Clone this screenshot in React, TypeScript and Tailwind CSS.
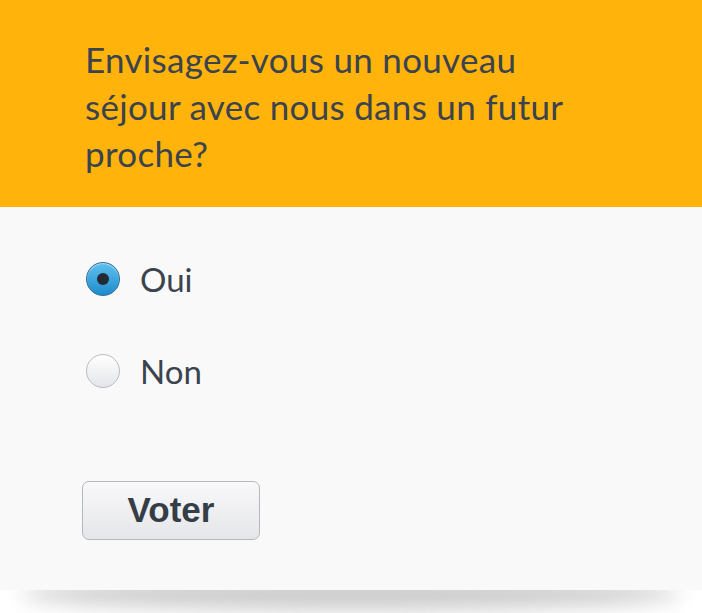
import React, { useState } from "react";

export default function App() {
    const [choice, setChoice] = useState("oui");
    const options = [
        { id: "oui", label: "Oui" },
        { id: "non", label: "Non" },
    ];
    return (
        <div className="w-[702px] h-[613px] bg-white overflow-hidden font-['Lato',sans-serif]">
            <div className="relative">
                {/* Question */}
                <div className="bg-[#ffb30b] h-[207px] pl-[85px] pr-[60px] pt-[36px]">
                    <h2 className="max-w-[510px] text-[35px] leading-[47px] text-[#3a434e] tracking-[0.3px]">
                        Envisagez-vous un nouveau séjour avec nous dans un futur proche?
                    </h2>
                </div>

                {/* Options */}
                <div className="relative z-10 bg-[#f9f9f9] h-[383px] pl-[86px] pt-[55px]">
                    <div className="flex flex-col gap-[58px]">
                        {options.map((o) => (
                            <label key={o.id} className="flex items-center gap-[20px] cursor-pointer h-[34px]" onClick={() => setChoice(o.id)}>
                                {choice === o.id ? (
                                    <span className="w-[34px] h-[34px] rounded-full border border-[#2f6f95] bg-gradient-to-b from-[#5ec0ee] to-[#1a8ccc] flex items-center justify-center shadow-[inset_0_1px_1px_rgba(255,255,255,0.5)]">
                                        <span className="w-[12px] h-[12px] rounded-full bg-[#232a31]" />
                                    </span>
                                ) : (
                                    <span className="w-[34px] h-[34px] rounded-full border border-[#b9bcc3] bg-gradient-to-b from-white to-[#e4e5e9]" />
                                )}
                                <span className="text-[33px] text-[#3a434e] leading-none">{o.label}</span>
                            </label>
                        ))}
                    </div>

                    <button className="mt-[93px] -ml-[4px] w-[178px] h-[59px] rounded-[7px] border border-[#b4b7be] bg-gradient-to-b from-[#f9f9fa] to-[#e5e6e9] font-['Liberation_Sans',sans-serif] font-bold text-[35px] text-[#353e47]">
                        Voter
                    </button>
                </div>

                {/* Drop shadow under card */}
                <div className="mx-[20px] -mt-[12px] h-[32px] rounded-[50%] bg-[#9a9a9a]/50 blur-[10px]" />
            </div>
        </div>
    );
}
